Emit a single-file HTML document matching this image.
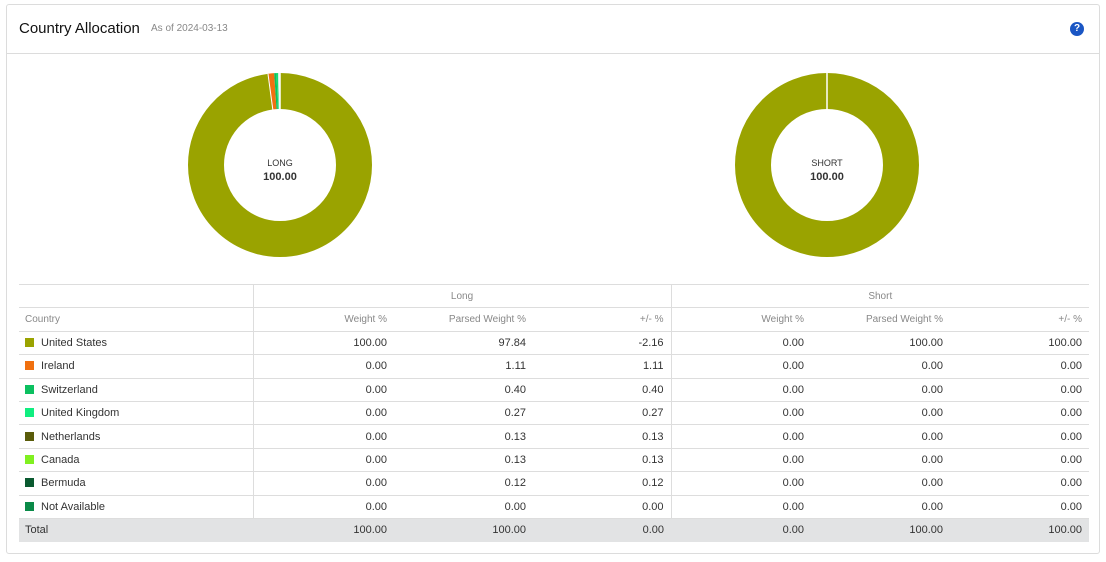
<!DOCTYPE html>
<html><head><meta charset="utf-8"><style>
body{margin:0;background:#fff;font-family:"Liberation Sans",sans-serif;}
.card{position:absolute;left:6px;top:4px;width:1094px;height:550px;border:1px solid #dcdcdc;border-radius:3px;box-sizing:border-box;}
.hdr{position:absolute;left:0;top:0;right:0;height:48px;border-bottom:1px solid #dcdcdc;}
.title{position:absolute;left:12px;top:15px;font-size:15px;color:#111;}
.asof{position:absolute;left:144px;top:18px;font-size:10px;color:#888;}
.help{position:absolute;left:1063px;top:17px;width:14px;height:14px;border-radius:50%;background:#1a56c4;color:#fff;font-size:10px;font-weight:bold;text-align:center;line-height:14px;}
table{position:absolute;left:19px;top:284px;width:1070px;border-collapse:collapse;table-layout:fixed;font-size:11px;color:#333;}
td{height:22.4px;border-top:1px solid #ddd;padding:0 7px;text-align:right;}
td:first-child{text-align:left;padding-left:6px;}
.sep{border-right:1px solid #ddd;}
.h td{color:#888;font-size:10px;}
.g td{text-align:center;}
.sw{display:inline-block;width:9px;height:9px;margin-right:7px;vertical-align:-1px;}
.tot td{background:#e2e3e4;border-top:1px solid #ddd;height:23px;}
</style></head><body>
<div class="card">
<div class="hdr"><div class="title">Country Allocation</div><div class="asof">As of 2024-03-13</div><div class="help">?</div></div>
</div>
<svg style="position:absolute;left:0;top:0" width="1106" height="290">
<g transform="translate(280,165) rotate(-90)" fill="none" stroke-width="36">
<circle r="74" stroke="#9aa300" stroke-dasharray="454.9 500"/>
<circle r="74" stroke="#f07010" stroke-dasharray="5.16 500" stroke-dashoffset="-454.9"/>
<circle r="74" stroke="#0cc060" stroke-dasharray="1.86 500" stroke-dashoffset="-460.06"/>
<circle r="74" stroke="#10e070" stroke-dasharray="1.25 500" stroke-dashoffset="-461.92"/>
<circle r="74" stroke="#d8f0e0" stroke-dasharray="1.8 500" stroke-dashoffset="-463.17"/>
</g>
<line x1="280" y1="73" x2="280" y2="111" stroke="#fff" stroke-width="1.5"/>
<line x1="268" y1="74" x2="273" y2="111" stroke="#fff" stroke-width="1"/>
<circle cx="827" cy="165" r="74" fill="none" stroke="#9aa300" stroke-width="36"/>
<line x1="827" y1="73" x2="827" y2="111" stroke="#fff" stroke-width="1.5"/>
<g font-family="Liberation Sans" text-anchor="middle" fill="#333">
<text x="280" y="166" font-size="9">LONG</text><text x="280" y="180" font-size="11" font-weight="bold">100.00</text>
<text x="827" y="166" font-size="9">SHORT</text><text x="827" y="180" font-size="11" font-weight="bold">100.00</text>
</g></svg>
<table>
<colgroup><col style="width:234px"><col style="width:141px"><col style="width:139px"><col style="width:138px"><col style="width:140px"><col style="width:139px"><col style="width:139px"></colgroup>
<tr class="g h"><td class="sep"></td><td colspan="3" class="sep">Long</td><td colspan="3">Short</td></tr>
<tr class="h"><td class="sep">Country</td><td>Weight %</td><td>Parsed Weight %</td><td class="sep">+/- %</td><td>Weight %</td><td>Parsed Weight %</td><td>+/- %</td></tr>
<tr><td class="sep"><span class="sw" style="background:#9aa300"></span>United States</td><td>100.00</td><td>97.84</td><td class="sep">-2.16</td><td>0.00</td><td>100.00</td><td>100.00</td></tr>
<tr><td class="sep"><span class="sw" style="background:#f07010"></span>Ireland</td><td>0.00</td><td>1.11</td><td class="sep">1.11</td><td>0.00</td><td>0.00</td><td>0.00</td></tr>
<tr><td class="sep"><span class="sw" style="background:#0cc060"></span>Switzerland</td><td>0.00</td><td>0.40</td><td class="sep">0.40</td><td>0.00</td><td>0.00</td><td>0.00</td></tr>
<tr><td class="sep"><span class="sw" style="background:#10ee80"></span>United Kingdom</td><td>0.00</td><td>0.27</td><td class="sep">0.27</td><td>0.00</td><td>0.00</td><td>0.00</td></tr>
<tr><td class="sep"><span class="sw" style="background:#5a5c0a"></span>Netherlands</td><td>0.00</td><td>0.13</td><td class="sep">0.13</td><td>0.00</td><td>0.00</td><td>0.00</td></tr>
<tr><td class="sep"><span class="sw" style="background:#80f020"></span>Canada</td><td>0.00</td><td>0.13</td><td class="sep">0.13</td><td>0.00</td><td>0.00</td><td>0.00</td></tr>
<tr><td class="sep"><span class="sw" style="background:#0a5a30"></span>Bermuda</td><td>0.00</td><td>0.12</td><td class="sep">0.12</td><td>0.00</td><td>0.00</td><td>0.00</td></tr>
<tr><td class="sep"><span class="sw" style="background:#0a8a48"></span>Not Available</td><td>0.00</td><td>0.00</td><td class="sep">0.00</td><td>0.00</td><td>0.00</td><td>0.00</td></tr>
<tr class="tot"><td>Total</td><td>100.00</td><td>100.00</td><td>0.00</td><td>0.00</td><td>100.00</td><td>100.00</td></tr>
</table>
</body></html>
